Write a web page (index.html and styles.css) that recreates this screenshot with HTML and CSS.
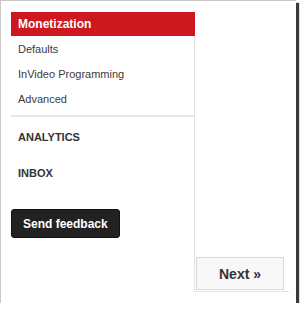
FILE: index.html
```html
<!DOCTYPE html>
<html lang="en">
<head>
    <meta charset="UTF-8">
    <meta name="viewport" content="width=device-width, initial-scale=1.0">
    <title>Channel settings</title>
    <link rel="stylesheet" href="styles.css">
</head>
<body>
    <div class="frame">
        <div class="sidebar">
            <ul class="menu">
                <li class="menu-item active">Monetization</li>
                <li class="menu-item">Defaults</li>
                <li class="menu-item">InVideo Programming</li>
                <li class="menu-item">Advanced</li>
            </ul>
            <ul class="sections">
                <li class="section">ANALYTICS</li>
                <li class="section">INBOX</li>
            </ul>
            <button class="feedback">Send feedback</button>
        </div>
        <div class="main">
            <button class="next">Next &raquo;</button>
        </div>
    </div>
</body>
</html>
```

FILE: styles.css
```css
body {
    margin: 0;
    background: #fff;
    font-family: "Liberation Sans", Arial, sans-serif;
    color: #333;
}
.frame {
    box-sizing: border-box;
    width: 296px;
    height: 303px;
    padding: 11px 0 0 10px;
    border-left: 1px solid #c8c8c8;
    border-top: 1px solid #c8c8c8;
    box-shadow: 3px 3px 1px #3a3a3a;
    display: flex;
    align-items: flex-start;
}
.sidebar {
    width: 183px;
}
.menu, .sections {
    list-style: none;
    margin: 0;
    padding: 0;
}
.menu {
    padding-bottom: 4px;
    border-bottom: 2px solid #e8e8e8;
    margin-right: -1px;
}
.menu-item {
    height: 25px;
    line-height: 26px;
    padding-left: 7px;
    font-size: 11px;
    color: #3c3c3c;
}
.menu-item.active {
    position: relative;
    z-index: 1;
    height: 24px;
    line-height: 24px;
    background: #cc181e;
    color: #fff;
    font-weight: bold;
    font-size: 12px;
}
.sections {
    padding-top: 2px;
}
.section {
    height: 36px;
    line-height: 37px;
    padding-left: 7px;
    font-size: 11px;
    font-weight: bold;
}
.feedback {
    margin-top: 18px;
    height: 29px;
    padding: 0 11px;
    border: 1px solid #111;
    border-radius: 3px;
    background: #222;
    color: #fff;
    font-family: inherit;
    font-size: 12px;
    font-weight: bold;
}
.main {
    box-sizing: border-box;
    width: 95px;
    height: 280px;
    border-left: 1px solid #e2e2e2;
    border-bottom: 1px solid #e2e2e2;
    display: flex;
    flex-direction: column;
    justify-content: flex-end;
    align-items: flex-start;
}
.next {
    width: 88px;
    height: 33px;
    margin: 0 0 1px 1px;
    border: 1px solid #d8d8d8;
    background: #f8f8f8;
    color: #333;
    font-family: inherit;
    font-size: 14px;
    font-weight: bold;
}
```
